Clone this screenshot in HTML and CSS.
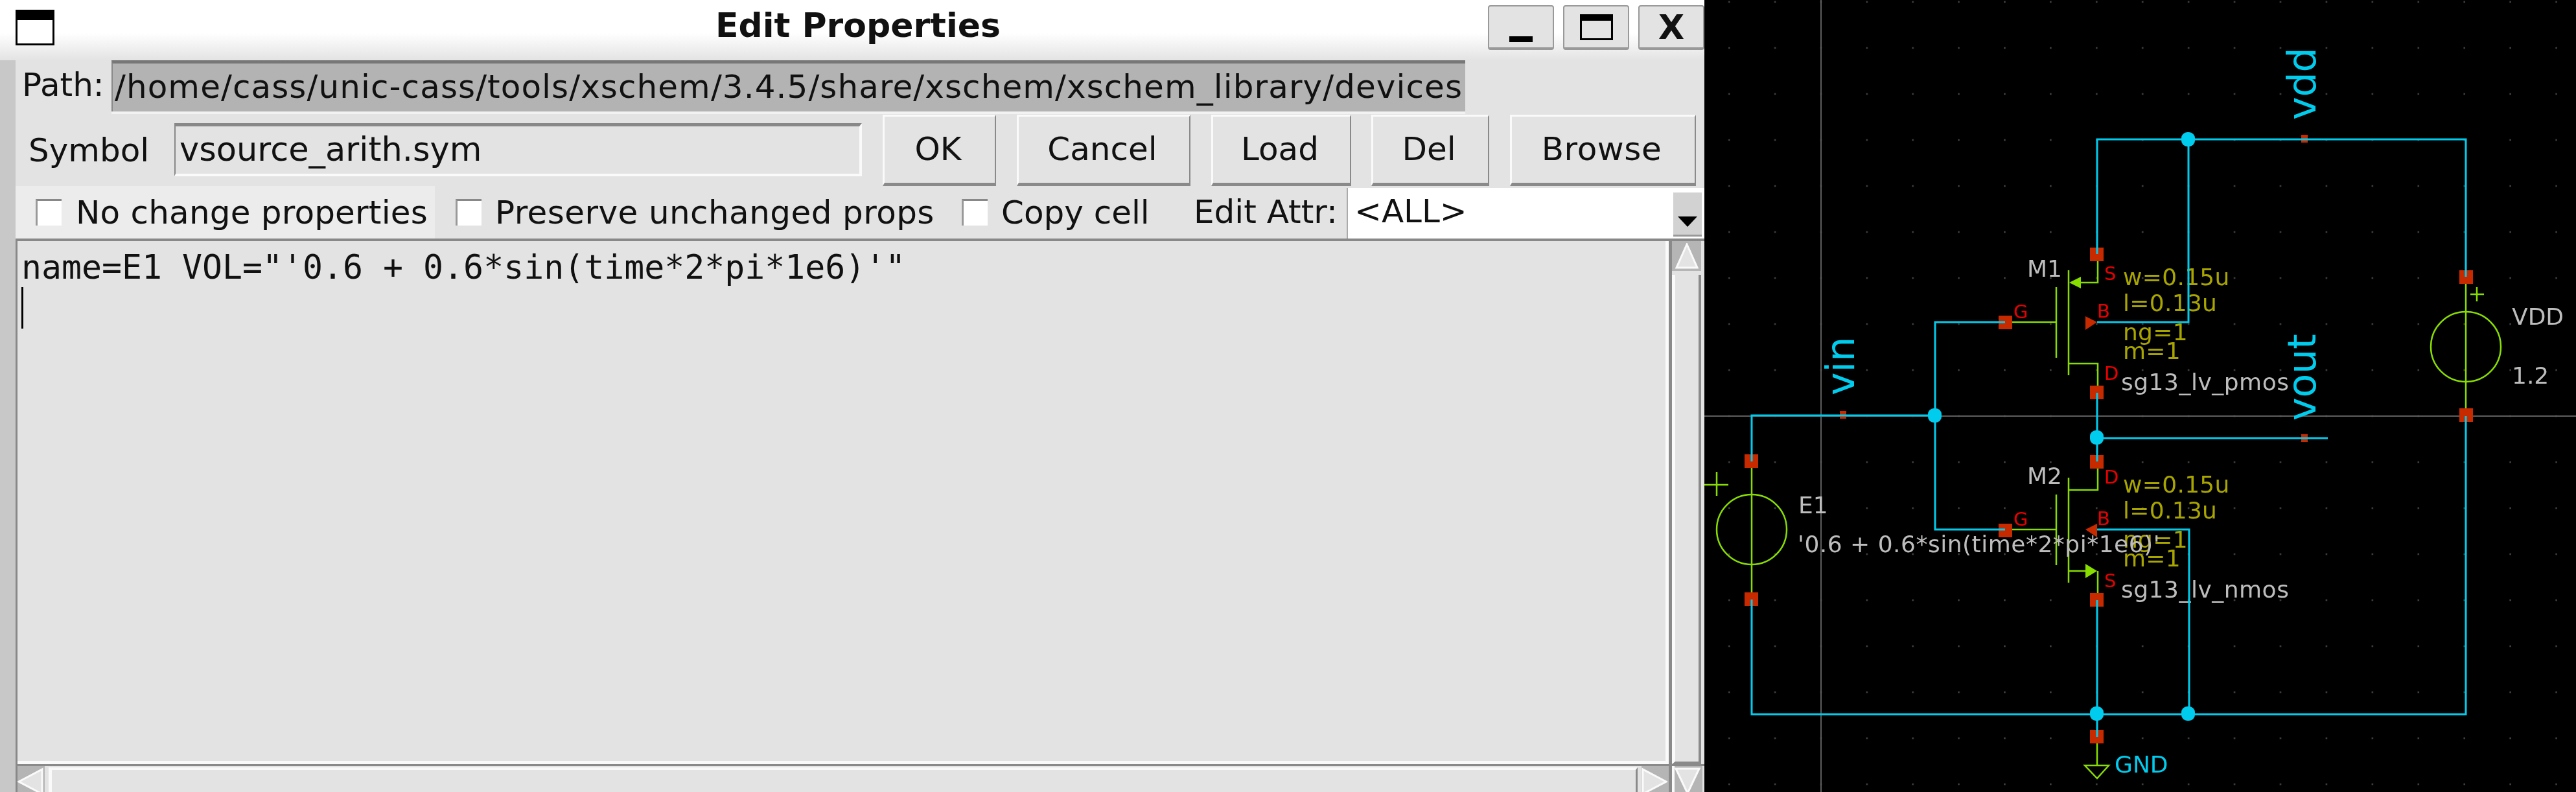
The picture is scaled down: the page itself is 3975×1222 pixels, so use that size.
FILE: index.html
```html
<!DOCTYPE html>
<html lang="en">
<head>
    <meta charset="UTF-8">
    <title>Edit Properties</title>
    <link rel="stylesheet" href="styles.css">
</head>
<body>
    <div class="window">
        <div class="titlebar">
            <div class="window-icon"></div>
            <div class="title">Edit Properties</div>
            <div class="wm-buttons">
                <div class="wm-button"><span class="wm-min"></span></div>
                <div class="wm-button"><span class="wm-max"></span></div>
                <div class="wm-button wm-close">X</div>
            </div>
        </div>

        <div class="dialog">
            <div class="path-row">
                <span class="path-label">Path:</span>
                <div class="path-field">/home/cass/unic-cass/tools/xschem/3.4.5/share/xschem/xschem_library/devices</div>
            </div>

            <div class="symbol-row">
                <span class="symbol-label">Symbol</span>
                <div class="symbol-field">vsource_arith.sym</div>
                <div class="button btn-ok">OK</div>
                <div class="button btn-cancel">Cancel</div>
                <div class="button btn-load">Load</div>
                <div class="button btn-del">Del</div>
                <div class="button btn-browse">Browse</div>
            </div>

            <div class="check-row">
                <div class="check check-one"><span class="box"></span>No change properties</div>
                <div class="check check-two"><span class="box"></span>Preserve unchanged props</div>
                <div class="check check-three"><span class="box"></span>Copy cell</div>
                <span class="attr-label">Edit Attr:</span>
                <div class="combo">
                    <span>&lt;ALL&gt;</span>
                    <div class="combo-arrow"><svg width="30" height="16" viewBox="0 0 30 16"><polygon points="0,0 30,0 15,16"/></svg></div>
                </div>
            </div>

            <div class="editor">
                <div class="text-area">
                    <div class="text-line">name=E1 VOL="'0.6 + 0.6*sin(time*2*pi*1e6)'"</div>
                    <div class="cursor"></div>
                </div>
                <div class="vscroll">
                    <div class="arrow arrow-up"><svg width="36" height="40" viewBox="0 0 36 40"><polygon points="18,2 34,38 2,38"/></svg></div>
                    <div class="slider"></div>
                </div>
                <div class="hscroll">
                    <div class="arrow arrow-left"><svg width="40" height="44" viewBox="0 0 40 44"><polygon points="2,22 38,3 38,41"/></svg></div>
                    <div class="slider"></div>
                    <div class="arrow arrow-right"><svg width="40" height="44" viewBox="0 0 40 44"><polygon points="38,22 2,3 2,41"/></svg></div>
                </div>
                <div class="corner">
                    <svg width="40" height="44" viewBox="0 0 40 44"><polygon points="2,2 38,2 20,40"/></svg>
                </div>
            </div>
        </div>
    </div>

    <svg class="schematic" viewBox="2630 0 1345 1222">
        <defs>
            <pattern id="grid" patternUnits="userSpaceOnUse" x="2774.5" y="606.5" width="70.9" height="71">
                <rect x="34.5" y="34.5" width="2" height="2" fill="#6a6a6a"/>
            </pattern>
        </defs>
        <rect x="2630" y="0" width="1345" height="1222" fill="url(#grid)"/>

        <!-- axes -->
        <path class="axis" d="M2810 0V1222M2630 642H3975"/>

        <!-- pins -->
        <rect class="pin" x="3225" y="382" width="21" height="21"/>
        <rect class="pin" x="3084" y="487" width="21" height="21"/>
        <rect class="pin" x="3225" y="595" width="21" height="21"/>
        <rect class="pin" x="3225" y="702" width="21" height="21"/>
        <rect class="pin" x="3084" y="808" width="21" height="21"/>
        <rect class="pin" x="3225" y="915" width="21" height="21"/>
        <rect class="pin" x="3795" y="417" width="21" height="21"/>
        <rect class="pin" x="3795" y="630" width="21" height="21"/>
        <rect class="pin" x="2692" y="701" width="21" height="21"/>
        <rect class="pin" x="2692" y="914" width="21" height="21"/>
        <rect class="pin" x="3225" y="1126" width="21" height="21"/>
        <rect class="pin" x="3551" y="208" width="10" height="12"/>
        <rect class="pin" x="3551" y="670" width="10" height="12"/>
        <rect class="pin" x="2839" y="634" width="10" height="12"/>
        <polygon class="pin" points="3218,488 3236,497 3218,509"/>
        <polygon class="pin" points="3218,817 3236,808 3236,829"/>

        <!-- devices -->
        <g class="device">
            <path d="M3237 403V436H3211M3192 417V579M3173 443V552M3173 497H3105M3192 561H3237V595"/>
            <path d="M3237 723V756H3192M3192 737V899M3173 763V872M3173 817H3105M3192 881H3218M3237 881V915"/>
            <path d="M3805 438V630M3812 454H3833M3822 443V465"/>
            <circle cx="3805" cy="535" r="54"/>
            <path d="M2703 722V914M2630 748H2667M2649 728V765"/>
            <circle cx="2703" cy="817" r="54"/>
            <path d="M3236 1147V1181M3217 1181H3254L3236 1201Z"/>
        </g>
        <polygon class="arrow-fill" points="3193,436 3211,427 3211,445"/>
        <polygon class="arrow-fill" points="3218,870 3236,881 3218,892"/>

        <!-- texts -->
        <text class="label pin-text" x="3247" y="432">S</text>
        <text class="label pin-text" x="3107" y="491">G</text>
        <text class="label pin-text" x="3236" y="490">B</text>
        <text class="label pin-text" x="3247" y="586">D</text>
        <text class="label pin-text" x="3247" y="746">D</text>
        <text class="label pin-text" x="3107" y="811">G</text>
        <text class="label pin-text" x="3236" y="810">B</text>
        <text class="label pin-text" x="3247" y="906">S</text>

        <text class="label attr" x="3276" y="440">w=0.15u</text>
        <text class="label attr" x="3276" y="480">l=0.13u</text>
        <text class="label attr" x="3276" y="525">ng=1</text>
        <text class="label attr" x="3276" y="554">m=1</text>
        <text class="label attr" x="3276" y="760">w=0.15u</text>
        <text class="label attr" x="3276" y="800">l=0.13u</text>
        <text class="label attr" x="3276" y="845">ng=1</text>
        <text class="label attr" x="3276" y="874">m=1</text>

        <text class="label name" x="3128" y="427">M1</text>
        <text class="label name" x="3128" y="747">M2</text>
        <text class="label name wide" x="3273" y="602">sg13_lv_pmos</text>
        <text class="label name wide" x="3273" y="922">sg13_lv_nmos</text>
        <text class="label name" x="3876" y="501">VDD</text>
        <text class="label name" x="3876" y="592">1.2</text>
        <text class="label name" x="2775" y="792">E1</text>
        <text class="label name wide" x="2774" y="852">'0.6 + 0.6*sin(time*2*pi*1e6)'</text>

        <text class="label net" x="3573" y="185" transform="rotate(-90 3573 185)">vdd</text>
        <text class="label net" x="3573" y="649" transform="rotate(-90 3573 649)">vout</text>
        <text class="label net" x="2861" y="610" transform="rotate(-90 2861 610)">vin</text>
        <text class="label gnd" x="3263" y="1192">GND</text>

        <!-- wires -->
        <g class="wires">
            <path d="M3236 392V215H3805V427"/>
            <path d="M3377 215V497H3236"/>
            <path d="M3094 497H2986V817H3094"/>
            <path d="M3236 606V712"/>
            <path d="M3236 676H3592"/>
            <path d="M2703 712V641H2986"/>
            <path d="M3236 817H3378V1102"/>
            <path d="M3236 926V1137"/>
            <path d="M2703 925V1102H3805V642"/>
        </g>
        <rect class="dot" x="3366" y="204" width="21" height="22" rx="9"/>
        <rect class="dot" x="2975" y="630" width="21" height="22" rx="9"/>
        <rect class="dot" x="3225" y="664" width="21" height="22" rx="9"/>
        <rect class="dot" x="3225" y="1090" width="21" height="22" rx="9"/>
        <rect class="dot" x="3366" y="1090" width="21" height="22" rx="9"/>
    </svg>
</body>
</html>
```

FILE: styles.css
```css
* {
    margin: 0;
    padding: 0;
    box-sizing: border-box;
}

body {
    width: 3975px;
    height: 1222px;
    overflow: hidden;
    display: flex;
    background: #000;
    font-family: "DejaVu Sans", sans-serif;
    color: #111;
}

.window {
    width: 2630px;
    height: 1222px;
    display: flex;
    flex-direction: column;
    background: #e3e3e3;
    font-size: 50px;
    filter: blur(0.7px);
}

/* title bar */
.titlebar {
    height: 93px;
    display: flex;
    align-items: flex-start;
    padding-left: 24px;
    background: linear-gradient(180deg, #fff 0%, #fff 55%, #e3e3e3 100%);
}

.window-icon {
    width: 60px;
    height: 55px;
    margin-top: 15px;
    background: #fff;
    border: 3px solid #000;
    border-top-width: 16px;
}

.title {
    flex: 1;
    padding-left: 268px;
    text-align: center;
    font-size: 52px;
    font-weight: bold;
    line-height: 78px;
}

.wm-buttons {
    display: flex;
    gap: 14px;
    padding-top: 8px;
}

.wm-button {
    width: 102px;
    height: 69px;
    display: flex;
    align-items: center;
    justify-content: center;
    background: #e3e3e3;
    border: 2px solid #999;
    border-bottom-width: 4px;
    border-radius: 4px;
}

.wm-min {
    width: 36px;
    height: 9px;
    margin-top: 38px;
    background: #000;
}

.wm-max {
    width: 51px;
    height: 40px;
    background: #e3e3e3;
    border: 3px solid #000;
    border-top-width: 10px;
}

.wm-close {
    font-size: 52px;
    font-weight: bold;
    line-height: 1;
}

/* dialog body */
.dialog {
    flex: 1;
    display: flex;
    flex-direction: column;
    border-left: 24px solid #c8c8c8;
    min-height: 0;
}

.path-row {
    height: 84px;
    display: flex;
    align-items: flex-start;
    padding-left: 10px;
}

.path-label {
    width: 138px;
    line-height: 76px;
}

.path-field {
    width: 2089px;
    height: 79px;
    padding-left: 3px;
    line-height: 72px;
    letter-spacing: 1.08px;
    white-space: nowrap;
    overflow: hidden;
    background: #b3b3b3;
    border-top: 5px solid #777;
    border-left: 2px solid #888;
    box-shadow: 0 4px 0 #f2f2f2;
}

.symbol-row {
    height: 110px;
    display: flex;
    align-items: flex-start;
    padding-left: 20px;
}

.symbol-label {
    width: 225px;
    line-height: 110px;
}

.symbol-field {
    width: 1061px;
    height: 82px;
    margin-top: 13px;
    padding-left: 6px;
    font-size: 51px;
    line-height: 72px;
    border-top: 5px solid #888;
    border-left: 2px solid #888;
    border-bottom: 4px solid #fafafa;
    border-right: 4px solid #fafafa;
}

.button {
    height: 110px;
    margin-left: 32px;
    padding-right: 5px;
    text-align: center;
    background: #e3e3e3;
    border-top: 3px solid #fafafa;
    border-left: 3px solid #fafafa;
    border-right: 2px solid #8a8a8a;
    border-bottom: 5px solid #8a8a8a;
    line-height: 100px;
}

.btn-ok { width: 175px; }
.btn-cancel { width: 268px; }
.btn-load { width: 216px; }
.btn-del { width: 182px; margin-left: 31px; }
.btn-browse { width: 287px; letter-spacing: 0.6px; }

.check-row {
    height: 81px;
    display: flex;
    align-items: stretch;
}

.check {
    display: flex;
    align-items: center;
    white-space: nowrap;
}

.check-one {
    width: 647px;
    padding-left: 31px;
    letter-spacing: 0.2px;
    background: #ececec;
}

.check-two {
    width: 781px;
    margin-left: 32px;
    letter-spacing: 0.42px;
}

.check-three {
    width: 358px;
    margin-left: 0;
}

.box {
    width: 40px;
    height: 41px;
    flex: none;
    margin-right: 22px;
    background: #fff;
    border-top: 3px solid #888;
    border-left: 3px solid #999;
}

.check-two .box,
.check-three .box {
    margin-right: 21px;
}

.attr-label {
    width: 236px;
    line-height: 81px;
}

.combo {
    flex: 1;
    height: 78px;
    margin-top: 3px;
    display: flex;
    justify-content: space-between;
    padding-left: 10px;
    line-height: 72px;
    background: #fff;
    border-left: 2px solid #aaa;
}

.combo-arrow {
    width: 44px;
    height: 68px;
    margin-top: 7px;
    margin-right: 4px;
    display: flex;
    justify-content: center;
    align-items: flex-end;
    padding-bottom: 12px;
    background: #d2d2d2;
    border-bottom: 3px solid #999;
}

/* text and scrollbars */
.editor {
    flex: 1;
    display: grid;
    grid-template-columns: 1fr 50px;
    grid-template-rows: 810px 1fr;
    min-height: 0;
    border-top: 4px solid #888;
}

.text-area {
    padding-left: 6px;
    font-family: "DejaVu Sans Mono", monospace;
    font-size: 51.5px;
    border-left: 3px solid #888;
    border-right: 5px solid #8a8a8a;
    box-shadow: inset -5px -5px 0 #fafafa;
    border-bottom: 3px solid #8a8a8a;
}

.text-line {
    line-height: 64px;
    height: 71px;
    padding-top: 8px;
    white-space: pre;
}

.cursor {
    width: 3px;
    height: 64px;
    background: #000;
}

.vscroll {
    display: flex;
    flex-direction: column;
    padding-right: 5px;
    border-bottom: 3px solid #8a8a8a;
}

.vscroll .arrow {
    height: 46px;
    background: #b5b5b5;
    display: flex;
    justify-content: center;
    align-items: center;
}

.vscroll .slider {
    flex: 1;
    margin-top: 6px;
    background: #e3e3e3;
    border-left: 5px solid #fafafa;
    border-right: 4px solid #8a8a8a;
    border-bottom: 4px solid #8a8a8a;
}

.arrow polygon,
.corner polygon {
    fill: #e3e3e3;
    stroke: #fafafa;
    stroke-width: 3;
}

.hscroll {
    display: flex;
    border-left: 3px solid #888;
    border-right: 5px solid #8a8a8a;
}

.hscroll .arrow {
    width: 42px;
    background: #b5b5b5;
}

.hscroll .slider {
    flex: 1;
    margin: 2px 6px 0;
    background: #e3e3e3;
    border-left: 5px solid #fafafa;
    border-top: 4px solid #fafafa;
    border-right: 3px solid #8a8a8a;
    border-bottom: 5px solid #8a8a8a;
}

.corner {
    background: #b5b5b5;
    margin-right: 3px;
    border-left: 4px solid #fafafa;
}

/* schematic */
.schematic {
    width: 1345px;
    height: 1222px;
    flex: none;
    background: #000;
    filter: blur(0.6px);
}

.axis {
    fill: none;
    stroke: #5e5e5e;
    stroke-width: 2;
}

.pin {
    fill: #c82a00;
}

.device path,
.device circle {
    fill: none;
    stroke: #88dd00;
    stroke-width: 2.5;
}

.arrow-fill {
    fill: #88dd00;
}

.wires path {
    fill: none;
    stroke: #00ccee;
    stroke-width: 3;
}

.dot {
    fill: #00ccee;
}

.label {
    font-family: "DejaVu Sans", sans-serif;
    font-size: 36px;
}

.pin-text {
    font-size: 29px;
    fill: #e80000;
}

.attr {
    fill: #a8a400;
    letter-spacing: 0.3px;
}

.name {
    fill: #bdbdbd;
}

.wide {
    letter-spacing: 0.5px;
}

.net {
    font-size: 60px;
    fill: #00ccee;
}

.gnd {
    fill: #00ccee;
}
```
